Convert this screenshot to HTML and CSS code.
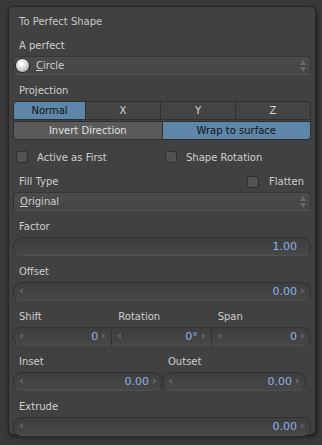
FILE: index.html
```html
<!DOCTYPE html>
<html lang="en">
<head>
    <meta charset="UTF-8">
    <meta name="viewport" content="width=device-width, initial-scale=1.0">
    <title>To Perfect Shape</title>
    <link rel="stylesheet" href="styles.css">
</head>
<body>

    <div class="panel">
        <div class="title">To Perfect Shape</div>

        <div class="label">A perfect</div>
        <div class="menu">
            <span class="radio"></span>
            <span class="menu-text"><u>C</u>ircle</span>
            <span class="updown"></span>
        </div>

        <div class="label gap">Projection</div>
        <div class="btn-row">
            <div class="btn active first-l">Normal</div>
            <div class="btn">X</div>
            <div class="btn">Y</div>
            <div class="btn first-r">Z</div>
        </div>
        <div class="btn-row">
            <div class="btn grey last-l">Invert Direction</div>
            <div class="btn active last-r">Wrap to surface</div>
        </div>

        <div class="check-row">
            <div class="check"><span class="box"></span>Active as First</div>
            <div class="check"><span class="box"></span>Shape Rotation</div>
        </div>

        <div class="label fill-row">
            <span>Fill Type</span>
            <span class="check flatten"><span class="box"></span>Flatten</span>
        </div>
        <div class="menu">
            <span class="menu-text"><u>O</u>riginal</span>
            <span class="updown"></span>
        </div>

        <div class="label gap">Factor</div>
        <div class="num slider"><span class="val">1.00</span></div>

        <div class="label gap">Offset</div>
        <div class="num"><span class="arr-l"></span><span class="val">0.00</span><span class="arr-r"></span></div>

        <div class="cols three gap">
            <div class="col">
                <div class="label">Shift</div>
                <div class="num join-l"><span class="arr-l"></span><span class="val">0</span><span class="arr-r"></span></div>
            </div>
            <div class="col">
                <div class="label">Rotation</div>
                <div class="num join-m"><span class="arr-l"></span><span class="val">0°</span><span class="arr-r"></span></div>
            </div>
            <div class="col">
                <div class="label">Span</div>
                <div class="num join-r"><span class="arr-l"></span><span class="val">0</span><span class="arr-r"></span></div>
            </div>
        </div>

        <div class="cols two gap">
            <div class="col">
                <div class="label">Inset</div>
                <div class="num"><span class="arr-l"></span><span class="val">0.00</span><span class="arr-r"></span></div>
            </div>
            <div class="col">
                <div class="label">Outset</div>
                <div class="num"><span class="arr-l"></span><span class="val">0.00</span><span class="arr-r"></span></div>
            </div>
        </div>

        <div class="label gap">Extrude</div>
        <div class="num"><span class="arr-l"></span><span class="val">0.00</span><span class="arr-r"></span></div>
    </div>

</body>
</html>
```

FILE: styles.css
```css
body {
    margin: 0;
    padding: 0;
    height: 445px;
    background-color: #393939;
    font-family: "DejaVu Sans", sans-serif;
    font-size: 10px;
    color: #cfcfcf;
}
.panel {
    position: relative;
    margin: 6px 0 0 8px;
    width: 298px;
    height: 427px;
    padding: 0 4px;
    background-color: #414141;
    border: 1px solid #262626;
    border-radius: 5px;
    box-shadow: 1px 2px 4px rgba(0, 0, 0, 0.5);
    box-sizing: content-box;
}
.title {
    height: 29px;
    line-height: 29px;
    padding-left: 6px;
    color: #c8c8c8;
}
.label {
    height: 20px;
    line-height: 20px;
    padding-left: 6px;
}
.gap {
    margin-top: 6px;
}
.menu {
    position: relative;
    display: flex;
    align-items: center;
    height: 19px;
    background: linear-gradient(#4b4b4b, #454545);
    border: 1px solid #363636;
    border-bottom-color: #575757;
    border-radius: 4px;
    box-sizing: border-box;
}
.menu-text {
    padding-left: 6px;
}
.radio {
    width: 13px;
    height: 13px;
    margin-left: 1px;
    border-radius: 50%;
    background: radial-gradient(circle at 40% 35%, #ffffff 10%, #c8c8c8 60%, #8c8c8c 100%);
    border: 1px solid #2a2a2a;
}
.radio + .menu-text {
    padding-left: 6px;
}
.updown {
    position: absolute;
    right: 3px;
    top: 3px;
    width: 7px;
    height: 12px;
}
.updown::before,
.updown::after {
    content: "";
    position: absolute;
    left: 0;
    border-left: 3.5px solid transparent;
    border-right: 3.5px solid transparent;
}
.updown::before {
    top: 0;
    border-bottom: 5px solid #6a6a6a;
}
.updown::after {
    bottom: 0;
    border-top: 5px solid #6a6a6a;
}
.btn-row {
    display: flex;
    height: 19px;
}
.btn-row + .btn-row {
    margin-top: 1px;
}
.btn {
    flex: 1;
    text-align: center;
    line-height: 17px;
    background-color: #444444;
    border: 1px solid #2f2f2f;
    border-left: none;
    color: #d8d8d8;
    box-sizing: border-box;
}
.btn:first-child {
    border-left: 1px solid #2f2f2f;
}
.btn-row .btn.active:first-child {
    flex: 0 0 73px;
}
.btn.active {
    background-color: #5d86a9;
    color: #121212;
}
.btn.grey {
    background-color: #5a5a5a;
    color: #e0e0e0;
}
.first-l {
    border-top-left-radius: 4px;
}
.first-r {
    border-top-right-radius: 4px;
}
.last-l {
    border-bottom-left-radius: 4px;
}
.last-r {
    border-bottom-right-radius: 4px;
}
.check-row {
    display: flex;
    height: 20px;
    margin-top: 7px;
    margin-bottom: 5px;
}
.check-row .check {
    flex: 1;
    padding-left: 3px;
}
.check {
    display: flex;
    align-items: center;
}
.box {
    width: 12px;
    height: 12px;
    margin-right: 9px;
    background-color: #525252;
    border: 1px solid #2e2e2e;
    border-radius: 3px;
    box-sizing: border-box;
}
.fill-row {
    display: flex;
    justify-content: space-between;
    padding-right: 7px;
}
.flatten .box {
    margin-right: 10px;
}
.num {
    position: relative;
    height: 19px;
    line-height: 18px;
    background: linear-gradient(#3e3e3e, #474747);
    border: 1px solid #313131;
    border-bottom-color: #4f4f4f;
    border-radius: 9px;
    box-sizing: border-box;
    text-align: right;
    font-size: 11px;
}
.val {
    padding-right: 13px;
    color: #8db2e8;
}
.arr-l,
.arr-r {
    position: absolute;
    top: 5px;
    border-top: 3.5px solid transparent;
    border-bottom: 3.5px solid transparent;
}
.arr-l {
    left: 5px;
    border-right: 4px solid #5e5e5e;
}
.arr-r {
    right: 5px;
    border-left: 4px solid #5e5e5e;
}
.cols {
    display: flex;
}
.col {
    flex: 1;
    min-width: 0;
}
.join-l {
    border-top-right-radius: 0;
    border-bottom-right-radius: 0;
}
.join-m {
    border-radius: 0;
    border-left: none;
}
.join-r {
    border-top-left-radius: 0;
    border-bottom-left-radius: 0;
    border-left: none;
}
.two .col:first-child .num {
    margin-right: -1px;
}
.two .col:last-child .num {
    margin-right: 5px;
}
```
